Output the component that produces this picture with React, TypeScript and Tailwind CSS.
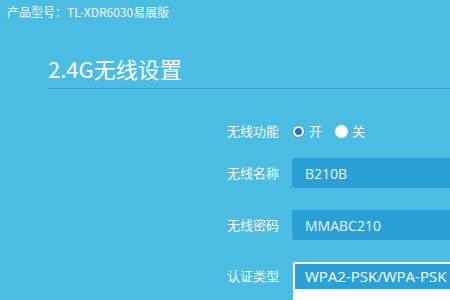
import React from "react";

const cjk = { fontFamily: '"Noto Sans CJK SC", "Noto Sans", sans-serif' };
const latin = { fontFamily: '"Open Sans", "Noto Sans", sans-serif' };

export default function App() {
  return (
    <div
      className="w-[450px] h-[300px] overflow-hidden bg-[#4bbde2] text-white"
      style={cjk}
    >
      <div className="h-[24px] pl-[7px] pt-[3px] text-[12px] leading-[18px] text-[#f2fafd] whitespace-nowrap">
        产品型号：TL-XDR6030易展版
      </div>
      <div className="ml-[48px] mt-[30px] h-[34px] text-[22px] leading-[28px] text-white whitespace-nowrap">
        2.4G无线设置
      </div>
      <div className="ml-[48px] h-[1px] bg-[#34a3cf]" />
      <div className="flex flex-col">
        <div className="flex items-center mt-[32px] h-[20px]">
          <div className="w-[279px] shrink-0 text-right text-[13px] text-[#f4fbfe]">无线功能</div>
          <div className="ml-[13px] shrink-0 flex items-center text-[13px]">
            <span className="w-[13px] h-[13px] rounded-full bg-white border border-[#3b8fe0] flex items-center justify-center">
              <span className="w-[7px] h-[7px] rounded-full bg-[#1f6fe0]" />
            </span>
            <span className="ml-[4px]">开</span>
            <span className="ml-[13px] w-[13px] h-[13px] rounded-full bg-white" />
            <span className="ml-[4px]">关</span>
          </div>
        </div>
        <div className="flex items-center mt-[17px] h-[30px]">
          <div className="w-[279px] shrink-0 text-right text-[13px] text-[#f4fbfe]">无线名称</div>
          <div
            className="ml-[13px] w-[200px] shrink-0 h-[30px] rounded-[3px] bg-[#2ba0d7] flex items-center pl-[13px] text-[14px] text-[#eaf6fb]"
            style={latin}
          >
            B210B
          </div>
        </div>
        <div className="flex items-center mt-[22px] h-[30px]">
          <div className="w-[279px] shrink-0 text-right text-[13px] text-[#f4fbfe]">无线密码</div>
          <div
            className="ml-[13px] w-[200px] shrink-0 h-[30px] rounded-[3px] bg-[#2ba0d7] flex items-center pl-[13px] text-[14px] text-[#eaf6fb]"
            style={latin}
          >
            MMABC210
          </div>
        </div>
        <div className="flex items-start mt-[22px] h-[40px]">
          <div className="w-[279px] shrink-0 text-right text-[13px] text-[#f4fbfe] mt-[4px]">认证类型</div>
          <div className="ml-[14px] w-[200px] shrink-0 h-[40px] border-[2px] border-white bg-white rounded-[2px]">
            <div
              className="h-[25px] bg-[#2ba0d7] flex items-center pl-[10px] text-[15px] text-white whitespace-nowrap"
              style={latin}
            >
              WPA2-PSK/WPA-PSK
            </div>
          </div>
        </div>
      </div>
    </div>
  );
}
